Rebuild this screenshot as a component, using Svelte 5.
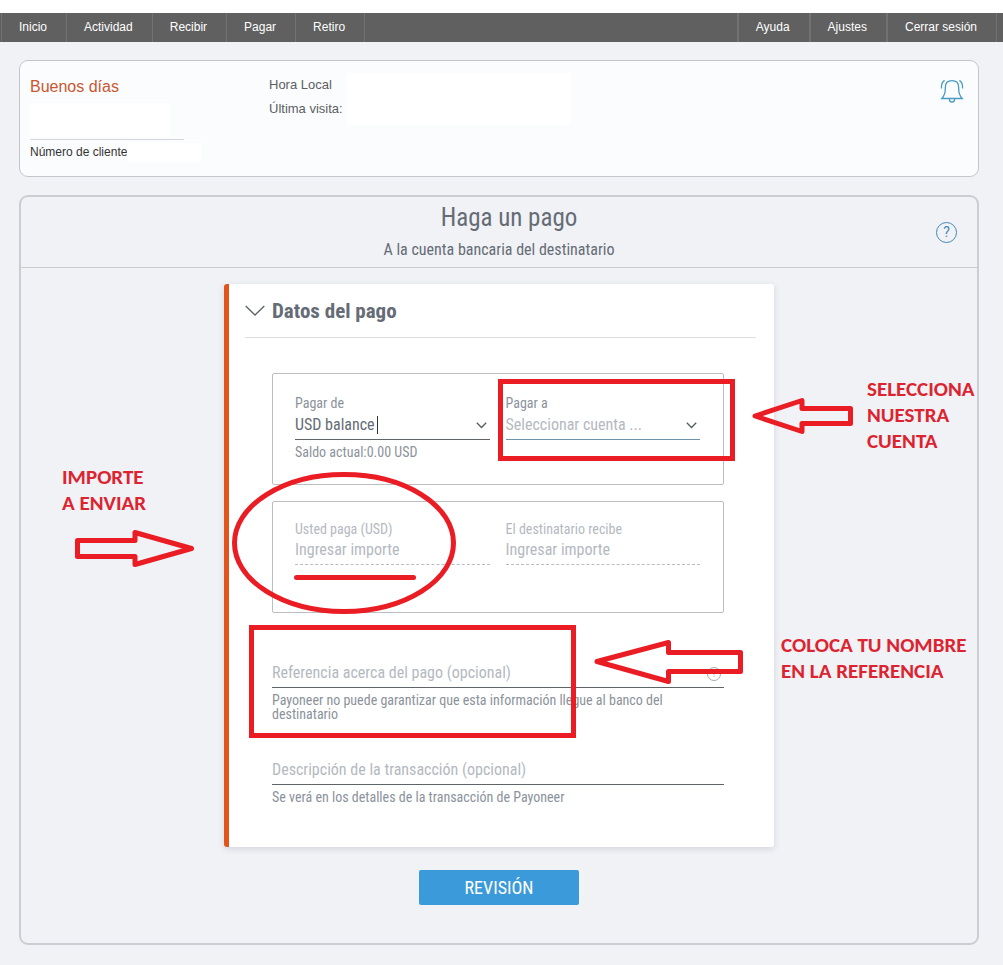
<script>
  const mainLinks = ['Inicio', 'Actividad', 'Recibir', 'Pagar', 'Retiro'];
  const sideLinks = ['Ayuda', 'Ajustes', 'Cerrar sesión'];
</script>

<nav class="topbar">
  <ul>
    {#each mainLinks as link}
      <li><a href="#top">{link}</a></li>
    {/each}
  </ul>
  <ul class="side">
    {#each sideLinks as link}
      <li><a href="#top">{link}</a></li>
    {/each}
  </ul>
</nav>

<div class="page">
  <section class="welcome">
    <div class="customer">
      <h2>Buenos días</h2>
      <div class="blank name"></div>
      <div class="client"><span>Número de cliente</span><i class="blank"></i></div>
    </div>
    <div class="visit">
      <div>
        <p>Hora Local</p>
        <p>Última visita:</p>
      </div>
      <div class="blank"></div>
    </div>
    <button class="bell" aria-label="Notificaciones">
      <svg width="24" height="24" viewBox="0 0 24 24" fill="none" stroke="#4a9bc4" stroke-width="1.3">
        <path d="M1.800 19.500C4.600 16.500 5.300 14.500 5.300 10V8.400C5.300 4 8.200 1.700 12 1.700s6.700 2.300 6.700 6.700V10c0 4.500 .7 6.500 3.500 9.500z" />
        <path d="M9.500 19.500v1.200a2.500 2.300 0 0 0 5 0v-1.200M4.600 1.400C2.200 2.800 1.200 5 1.400 9.500M19.400 1.400c2.400 1.400 3.400 3.600 3.200 8.100" />
      </svg>
    </button>
  </section>

  <main class="panel">
    <header>
      <h1>Haga un pago</h1>
      <p>A la cuenta bancaria del destinatario</p>
      <button class="help" aria-label="Ayuda sobre pagos">?</button>
    </header>

    <form class="stage">
      <div class="card">
        <h2>
          <svg width="20" height="12" viewBox="0 0 20 12" fill="none" stroke="#5d656d" stroke-width="1.4"><path d="M.7 1l9.300 9L19.300 1" /></svg>
          Datos del pago
        </h2>

        <div class="body">
          <div class="box">
            <div class="field">
              <label for="from">Pagar de</label>
              <div class="control">
                <select id="from"><option>USD balance</option></select>
                <i class="caret"></i>
                <svg class="chev" width="11" height="7" viewBox="0 0 11 7" fill="none" stroke="#555c62" stroke-width="1.300"><path d="M.8 .8l4.700 4.700L10.200 .8" /></svg>
              </div>
              <small>Saldo actual:0.00 USD</small>
            </div>
            <div class="field to">
              <label for="to">Pagar a</label>
              <div class="control">
                <select id="to"><option>Seleccionar cuenta ...</option></select>
                <svg class="chev" width="11" height="7" viewBox="0 0 11 7" fill="none" stroke="#555c62" stroke-width="1.300"><path d="M.8 .8l4.700 4.700L10.200 .8" /></svg>
              </div>
            </div>
          </div>

          <div class="box amounts">
            <div class="field">
              <label for="pay">Usted paga (USD)</label>
              <input id="pay" placeholder="Ingresar importe" />
            </div>
            <div class="field">
              <label for="receive">El destinatario recibe</label>
              <input id="receive" placeholder="Ingresar importe" />
            </div>
          </div>

          <div class="line">
            <div class="control">
              <input aria-label="Referencia acerca del pago" placeholder="Referencia acerca del pago (opcional)" />
              <span class="hint">?</span>
            </div>
            <small>Payoneer no puede garantizar que esta información llegue al banco del destinatario</small>
          </div>

          <div class="line">
            <input aria-label="Descripción de la transacción" placeholder="Descripción de la transacción (opcional)" />
            <small>Se verá en los detalles de la transacción de Payoneer</small>
          </div>
        </div>
      </div>

      <button class="submit" type="button">REVISIÓN</button>

      <svg class="marks" width="550" height="563" viewBox="224 284 550 563" fill="none" stroke="#ea1c24" stroke-width="5" stroke-linejoin="round">
        <rect x="500.500" y="381.500" width="232" height="77" stroke-linejoin="miter" />
        <rect x="251.500" y="627.500" width="322" height="108" stroke-linejoin="miter" />
        <ellipse cx="344" cy="543" rx="109.500" ry="68.500" />
        <path d="M296.500 577.500H413.500" stroke-linecap="round" />
        <path d="M755 416L802 400.500V408.500H850.500V423.500H802V431.500Z" />
        <path d="M191.500 548.500L135 532.500V540.500H77.500V556.500H135V564.500Z" />
        <path d="M597 661.500L668.500 642.500V652.500H740.500V671.500H668.500V681.500Z" />
      </svg>
      <p class="note amount">IMPORTE<br />A ENVIAR</p>
      <p class="note account">SELECCIONA<br />NUESTRA<br />CUENTA</p>
      <p class="note reference">COLOCA TU NOMBRE<br />EN LA REFERENCIA</p>
    </form>
  </main>
</div>

<style>
  :global(body) {
    background: #f1f2f6;
    font-family: 'Liberation Sans', Arial, sans-serif;
  }
  * { box-sizing: border-box; }
  h1, h2, p, ul { margin: 0; padding: 0; }
  button, input, select { font-family: inherit; margin: 0; }

  .topbar {
    display: flex;
    justify-content: space-between;
    padding: 0 6px 0 1px;
    border-top: 13px solid #fff;
    background: #606060;
    font-size: 12px;
    line-height: 28px;
  }
  ul { display: flex; list-style: none; height: 29px; }
  li { padding: 0 19px 0 17px; border-left: 1px solid #727272; }
  li:last-child { border-right: 1px solid #727272; }
  .side li { border-left-width: 2px; }
  li a { color: #fff; text-decoration: none; }

  .page { padding: 18px 24px 19px 19px; }
  .welcome {
    position: relative;
    display: flex;
    height: 117px;
    padding: 10px 10px 9px;
    border: 1px solid #c4c6cc;
    border-radius: 9px;
    background: #fbfcfe;
  }
  .blank { background: #fff; }
  .customer { width: 239px; }
  .customer h2 { color: #c9572e; font-size: 16px; font-weight: 400; line-height: 32px; }
  .name { width: 140px; height: 34px; }
  .client {
    display: flex;
    align-items: center;
    width: 154px;
    margin-top: 2px;
    border-top: 1px solid #d3d6da;
    color: #333;
    font-size: 12px;
    line-height: 24px;
    white-space: nowrap;
  }
  .client i { flex: none; width: 74px; height: 19px; }
  .visit { display: flex; gap: 4px; color: #5b5f63; font-size: 13px; line-height: 24px; padding-top: 2px; }
  .visit .blank { width: 224px; height: 52px; }
  .bell { margin: 8px 4px 0 auto; height: 24px; padding: 0; border: 0; background: none; }

  .panel {
    margin-top: 18px;
    border: 2px solid #cbcdd2;
    border-radius: 9px;
    color: #656c75;
    font-family: 'Roboto Condensed', 'Liberation Sans Narrow', Roboto, sans-serif;
  }
  header {
    position: relative;
    height: 71px;
    padding-top: 4px;
    border-bottom: 1px solid #cbcdd2;
    text-align: center;
  }
  h1 { padding-left: 20px; font-size: 25px; font-weight: 400; line-height: 34px; }
  header p { font-size: 16px; line-height: 30px; }
  .help {
    position: absolute;
    top: 25px;
    right: 20px;
    width: 21px;
    height: 21px;
    padding: 0;
    border: 1px solid #4487b8;
    border-radius: 50%;
    background: none;
    color: #4487b8;
    font: 14px/19px Roboto, sans-serif;
  }

  .stage {
    position: relative;
    width: 550px;
    margin: 16px auto 38px;
  }
  .card {
    height: 563px;
    padding: 8px 18px 0 16px;
    border-left: 5px solid #e2541b;
    border-radius: 3px;
    background: #fff;
    box-shadow: 0 2px 6px rgba(60, 60, 90, 0.16);
  }
  .card h2 {
    display: flex;
    align-items: center;
    gap: 7px;
    height: 46px;
    padding-bottom: 8px;
    border-bottom: 1px solid #dcdee0;
    font-size: 21px;
    font-weight: 700;
  }
  .body { padding: 35px 32px 0 27px; }
  .box {
    display: grid;
    grid-template-columns: 1fr 1fr;
    gap: 16px;
    height: 112px;
    margin-bottom: 16px;
    padding: 19px 23px 0 22px;
    border: 1px solid #bcbec1;
    border-radius: 2px;
  }
  label { display: block; color: #8b929b; font-size: 14px; line-height: 20px; }
  .control { position: relative; }
  select, input {
    display: block;
    width: 100%;
    height: 27px;
    padding: 0 0 4px;
    border: 0;
    border-bottom: 1px solid #5f6468;
    border-radius: 0;
    outline: none;
    appearance: none;
    background: none;
    color: #656c75;
    font-size: 16px;
  }
  .to select { color: #b4b9bf; border-color: #6b93aa; }
  .caret { position: absolute; left: 82px; top: 3px; width: 1px; height: 18px; background: #333; }
  .chev { position: absolute; right: 3px; top: 9px; }
  small { display: block; padding-top: 5px; color: #8b929b; font-size: 14px; line-height: 14px; }
  .amounts { padding-top: 17px; }
  .amounts label { color: #b4b9bf; }
  .amounts input { height: 26px; border-bottom: 1px dashed #b9bcc0; }
  ::placeholder { color: #b4b9bf; opacity: 1; }
  .line { height: 97px; padding-top: 32px; }
  .hint {
    position: absolute;
    right: 3px;
    top: 6px;
    width: 14px;
    height: 14px;
    border: 1px solid #a5a9ad;
    border-radius: 50%;
    color: #a5a9ad;
    font-size: 10px;
    line-height: 12px;
    text-align: center;
  }
  .submit {
    display: block;
    width: 160px;
    height: 35px;
    margin: 23px auto 0;
    padding: 0;
    border: 0;
    border-radius: 2px;
    background: #3b9ad9;
    color: #fff;
    font-size: 18px;
  }
  .marks { position: absolute; left: 0; top: 0; overflow: visible; pointer-events: none; }
  .note {
    position: absolute;
    color: #dc2430;
    font: 700 21px/26px Carlito, Lato, sans-serif;
    white-space: nowrap;
  }
  .amount { left: -162px; top: 180px; }
  .account { left: 643px; top: 92px; }
  .reference { left: 557px; top: 348px; }
</style>
